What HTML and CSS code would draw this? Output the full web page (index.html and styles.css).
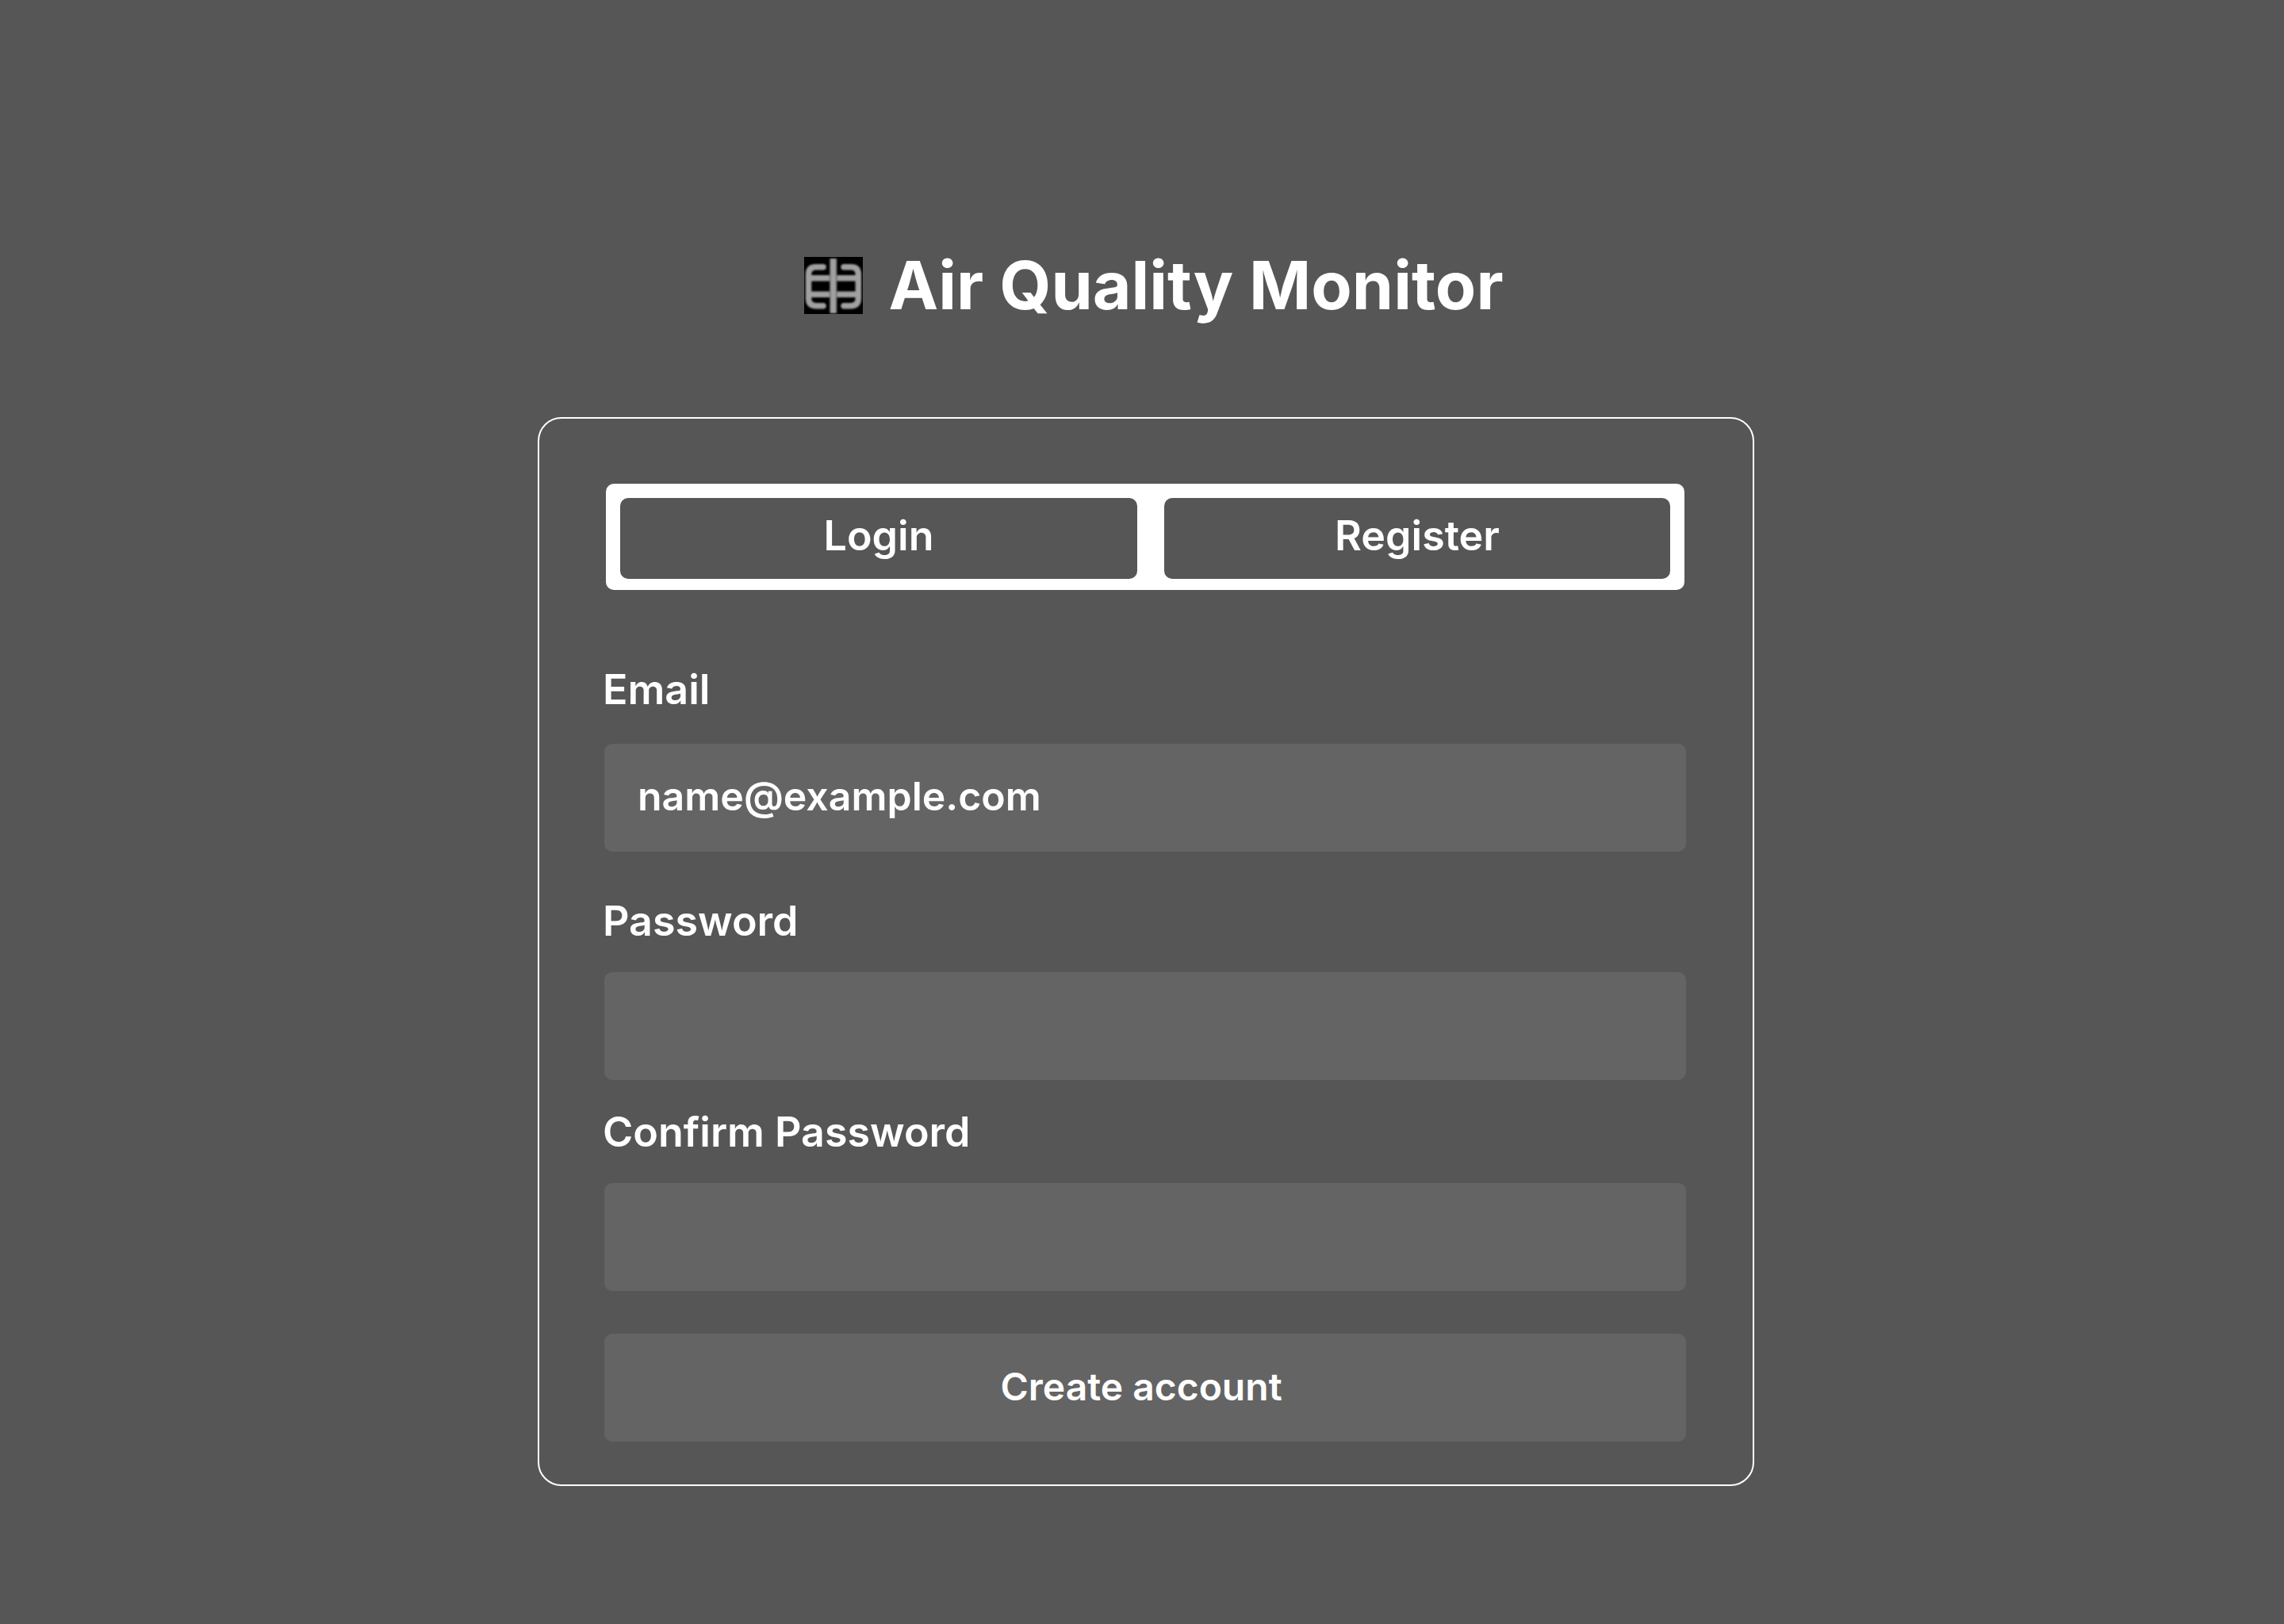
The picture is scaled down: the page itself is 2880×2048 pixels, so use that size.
FILE: index.html
```
<!DOCTYPE html>
<html lang="en">
<head>
  <meta charset="utf-8">
  <meta name="viewport" content="width=device-width, initial-scale=1">
  <title>Air Quality Monitor</title>
  <link rel="stylesheet" href="styles.css">
</head>
<body>
  <main class="page">
    <header class="brand">
      <svg class="brand-icon" viewBox="0 0 74 72" aria-hidden="true">
        <defs>
          <filter id="soft" x="-10%" y="-10%" width="120%" height="120%"><feGaussianBlur stdDeviation="0.9"/></filter>
        </defs>
        <rect width="74" height="72" fill="#000"/>
        <g fill="none" stroke="#a0a0a0" stroke-width="7.5" filter="url(#soft)">
          <path stroke-linecap="round" d="M24 12.7H15Q5.5 12.7 5.5 22V52Q5.5 61.7 15 61.7H24"/>
          <path stroke-linecap="round" d="M50 12.7H59Q68.3 12.7 68.3 22V52Q68.3 61.7 59 61.7H50"/>
          <path d="M6 26.7H68M6 47.3H68"/>
          <path stroke="#505050" stroke-width="9.5" d="M36.7 2V71"/>
          <path stroke-width="7" d="M36.7 2V71"/>
        </g>
      </svg>
      <h1 class="brand-title">Air Quality Monitor</h1>
    </header>

    <section class="card">
      <nav class="tabs" aria-label="Account">
        <button class="tab" type="button">Login</button>
        <button class="tab" type="button">Register</button>
      </nav>

      <form class="form">
        <div class="field field-email">
          <label class="label" for="email">Email</label>
          <input class="input" id="email" type="email" placeholder="name@example.com">
        </div>
        <div class="field field-password">
          <label class="label" for="password">Password</label>
          <input class="input" id="password" type="password">
        </div>
        <div class="field">
          <label class="label" for="confirm">Confirm Password</label>
          <input class="input" id="confirm" type="password">
        </div>
        <button class="submit" type="submit">Create account</button>
      </form>
    </section>
  </main>
</body>
</html>
```
FILE: styles.css
```
*,
*::before,
*::after {
  box-sizing: border-box;
}

body {
  margin: 0;
  min-height: 100vh;
  background: #565656;
  color: #ffffff;
  font-family: Inter, "Liberation Sans", sans-serif;
}

button,
input {
  margin: 0;
  border: 0;
  color: inherit;
  font-family: inherit;
  font-weight: 600;
}

.page {
  display: flex;
  flex-direction: column;
  align-items: center;
  gap: 114px;
  padding: 308px 0 100px 10px;
}

.brand {
  display: flex;
  align-items: center;
  gap: 32px;
  padding-left: 20px;
}

.brand-icon {
  flex: none;
  width: 74px;
  height: 72px;
}

.brand-title {
  margin: 0;
  font-size: 84px;
  font-weight: 700;
  line-height: 104px;
}

.card {
  width: 100%;
  max-width: 1534px;
  padding: 82px 84px 54px 82px;
  border: 2px solid #ffffff;
  border-radius: 30px;
}

.tabs {
  display: grid;
  grid-template-columns: 652fr 638fr;
  gap: 34px;
  margin: 0 2px 94px;
  padding: 18px 18px 14px;
  border-radius: 10px;
  background: #ffffff;
}

.tab {
  height: 102px;
  padding: 0 0 6px;
  border-radius: 10px;
  background: #565656;
  font-size: 52px;
  line-height: 64px;
}

.form,
.field {
  display: flex;
  flex-direction: column;
}

.field {
  gap: 32px;
  margin-bottom: 54px;
}

.field-email {
  gap: 36px;
  margin-bottom: 56px;
}

.field-password {
  margin-bottom: 34px;
}

.label {
  margin-left: -2px;
  font-size: 52px;
  font-weight: 600;
  line-height: 64px;
}

.input,
.submit {
  width: 100%;
  height: 136px;
  border-radius: 10px;
  background: #646464;
}

.input {
  padding: 0 42px 4px;
  font-size: 50px;
}

.input::placeholder {
  color: #ffffff;
  opacity: 1;
}

.submit {
  padding: 0 10px 4px 0;
  font-size: 48px;
}
```
